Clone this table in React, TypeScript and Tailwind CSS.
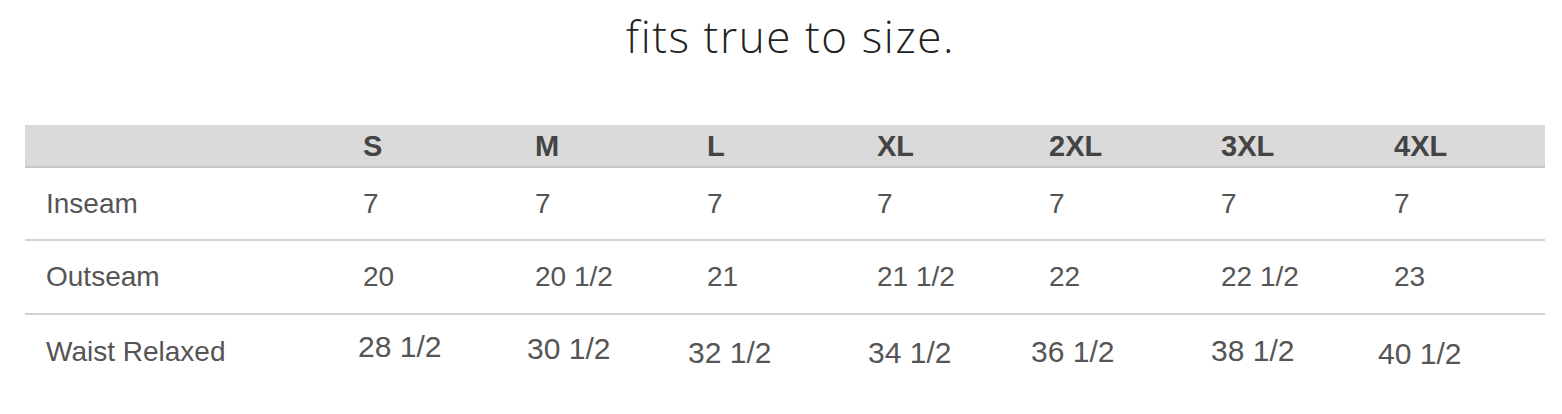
const sizes = ['S', 'M', 'L', 'XL', '2XL', '3XL', '4XL'];

const rows = [
  {
    label: 'Inseam',
    values: ['7', '7', '7', '7', '7', '7', '7'].map((v) => ({ v, cls: '' })),
  },
  {
    label: 'Outseam',
    values: ['20', '20 1/2', '21', '21 1/2', '22', '22 1/2', '23'].map((v) => ({ v, cls: '' })),
  },
  {
    label: 'Waist Relaxed',
    values: [
      { v: '28 1/2', cls: 'ml-[-5px] mt-[-12px]' },
      { v: '30 1/2', cls: 'ml-[-8px] mt-[-8px]' },
      { v: '32 1/2', cls: 'ml-[-19px]' },
      { v: '34 1/2', cls: 'ml-[-9px]' },
      { v: '36 1/2', cls: 'ml-[-18px] mt-[-2px]' },
      { v: '38 1/2', cls: 'ml-[-10px] mt-[-4px]' },
      { v: '40 1/2', cls: 'ml-[-16px] mt-[2px]' },
    ],
  },
];

// label column, then S..3XL at fixed widths, 4XL takes the rest
const grid = 'grid grid-cols-[338px_172px_172px_170px_172px_172px_173px_1fr]';

export default function App() {
  return (
    <div className="w-[1562px] h-[414px] bg-white overflow-hidden">
      {/* Heading */}
      <div className="pt-[14px] pl-[19px] text-center">
        <h2 className="font-['Open_Sans',sans-serif] font-light text-[44px] tracking-[1.6px] leading-none text-[#222]">
          fits true to size.
        </h2>
      </div>

      {/* Size chart */}
      <div className="mt-[67px] ml-[25px] w-[1520px] font-['Liberation_Sans',Arial,sans-serif]">
        <div className={`${grid} h-[43px] items-center bg-[#dadada] border-b-2 border-[#c6c6c6]`}>
          <div />
          {sizes.map((s) => (
            <div key={s} className="text-[29px] font-bold text-[#444] leading-normal">
              {s}
            </div>
          ))}
        </div>

        {rows.map((row, i) => (
          <div
            key={row.label}
            className={`${grid} items-center ${i === 0 ? 'h-[73px]' : 'h-[74px]'} ${
              i < rows.length - 1 ? 'border-b-2 border-[#d2d2d2]' : ''
            }`}
          >
            <div className="pl-[21px] text-[28px] text-[#555] leading-normal">{row.label}</div>
            {row.values.map((c, j) => (
              <div
                key={j}
                className={`${i === 2 ? 'text-[30px]' : 'text-[28px]'} text-[#555] leading-normal ${c.cls}`}
              >
                {c.v}
              </div>
            ))}
          </div>
        ))}
      </div>
    </div>
  );
}
